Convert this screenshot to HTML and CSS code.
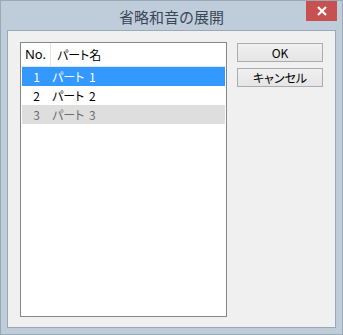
FILE: index.html
```html
<!DOCTYPE html>
<html lang="ja">
<head>
<meta charset="utf-8">
<title>省略和音の展開</title>
<link rel="stylesheet" href="styles.css">
</head>
<body>
<div class="window">
  <div class="titlebar">
    <span class="title">省略和音の展開</span>
    <button class="close" aria-label="閉じる">
      <svg width="10" height="10" viewBox="0 0 10 10"><path d="M1 1 L9 9 M9 1 L1 9" stroke="#fff" stroke-width="2.2" fill="none"/></svg>
    </button>
  </div>
  <div class="client">
    <div class="listbox">
      <div class="list-head">
        <div class="hcell hno">No.</div>
        <div class="hcell hname">パート名</div>
      </div>
      <div class="rows">
        <div class="row selected"><span class="cno">1</span><span class="cname">パート 1</span></div>
        <div class="row"><span class="cno">2</span><span class="cname">パート 2</span></div>
        <div class="row disabled"><span class="cno">3</span><span class="cname">パート 3</span></div>
      </div>
    </div>
    <div class="buttons">
      <button class="btn">OK</button>
      <button class="btn">キャンセル</button>
    </div>
  </div>
</div>
</body>
</html>
```
FILE: styles.css
```css
* { box-sizing: border-box; }
html, body { margin: 0; padding: 0; }
body {
  width: 343px;
  height: 335px;
  font-family: "Noto Sans CJK JP", "Noto Sans", sans-serif;
  font-feature-settings: "palt";
  background: #bfcddb;
}
.window {
  width: 343px;
  height: 335px;
  border: 1px solid #9ba8b6;
  background: #bfcddb;
  padding: 0 6px 6px 6px;
  display: flex;
  flex-direction: column;
}
.titlebar {
  position: relative;
  height: 29px;
  display: flex;
  align-items: center;
  justify-content: center;
}
.title {
  font-size: 15px;
  color: #3a4757;
  line-height: 1;
  margin-top: 2px;
  font-feature-settings: normal;
}
.close {
  position: absolute;
  right: -1px;
  top: 0;
  width: 31px;
  height: 20px;
  border: 0;
  padding: 0;
  background: #c75050;
  display: flex;
  align-items: center;
  justify-content: center;
}
.close svg { display: block; }
.client {
  flex: 1;
  border: 1px solid #9ba8b6;
  background: #f0f0f0;
  padding: 11px 0 0 12px;
  display: flex;
  align-items: flex-start;
}
.listbox {
  width: 207px;
  height: 275px;
  border: 1px solid #828790;
  background: #fff;
  margin-right: 10px;
}
.list-head {
  display: flex;
  height: 24px;
  border-bottom: 1px solid #e3e8ef;
  font-size: 12px;
  color: #000;
}
.hcell {
  display: flex;
  align-items: center;
  line-height: 1;
}
.hno {
  width: 30px;
  justify-content: center;
  border-right: 1px solid #e5e5e5;
  font-family: "Noto Sans", sans-serif;
  font-size: 13px;
}
.hname { padding-left: 6px; }
.rows { padding: 0 1px; }
.row {
  display: flex;
  height: 19px;
  align-items: center;
  font-size: 12px;
  color: #000;
  line-height: 1;
}
.row.selected { background: #3399ff; color: #fff; }
.row.disabled { background: #dedede; color: #6d6d6d; }
.cno {
  width: 29px;
  text-align: center;
}
.cname { padding-left: 1px; word-spacing: 2px; }
.buttons {
  display: flex;
  flex-direction: column;
  gap: 6px;
  margin-top: 1px;
}
.btn {
  width: 86px;
  height: 19px;
  border: 1px solid #acacac;
  background: linear-gradient(#f0f0f0, #e5e5e5);
  font-family: "Noto Sans CJK JP", "Noto Sans", sans-serif;
  font-feature-settings: "palt";
  font-size: 12px;
  color: #000;
  padding: 0;
  line-height: 1;
}
```
